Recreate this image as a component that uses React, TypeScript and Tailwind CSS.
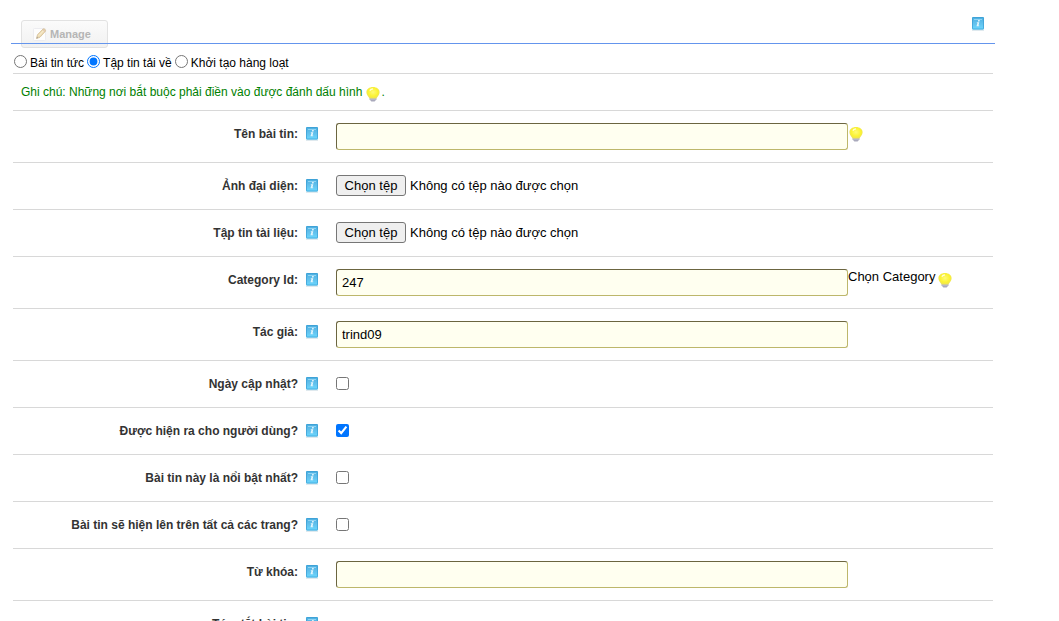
import { useId, useRef, useState } from "react";
import type { ReactNode } from "react";

function InfoIcon() {
  return (
    <svg width="14" height="16" viewBox="0 0 14 16" aria-hidden="true" className="block">
      <defs>
        <linearGradient id="info-blue" x1="0" y1="0" x2="0" y2="1">
          <stop offset="0" stopColor="#4aaee0" />
          <stop offset="0.5" stopColor="#62c0ec" />
          <stop offset="1" stopColor="#6ad8ff" />
        </linearGradient>
      </defs>
      <rect x="1" y="13" width="12" height="2" fill="#dfe9ee" />
      <rect x="1" y="1" width="12" height="12.5" rx="1" fill="url(#info-blue)" />
      <rect x="1.5" y="1.5" width="11" height="11.5" rx="0.8" fill="none" stroke="#3a9dd3" strokeOpacity="0.7" />
      <path d="M3 3h8v1H3z" fill="#8fd3f3" />
      <path d="M7.2 4h1.6l-.3 1.4H6.9zM5.9 6.2h2.4l-.8 3.2h.8l-.2.9H5.5l.9-3.2h-.7z" fill="#e4f6fd" />
    </svg>
  );
}

function BulbIcon() {
  return (
    <svg width="14" height="16" viewBox="0 0 14 16" aria-hidden="true" className="block">
      <defs>
        <radialGradient id="bulb-glow" cx="0.5" cy="0.45" r="0.6">
          <stop offset="0" stopColor="#fffa78" />
          <stop offset="0.6" stopColor="#fbf332" />
          <stop offset="1" stopColor="#e9de60" />
        </radialGradient>
      </defs>
      <path d="M3.6 11.4h6.800v2.100L8.600 15.500H5.400L3.600 13.500z" fill="#a9a9bc" />
      <path d="M3.800 13h6.400" stroke="#cdcddb" strokeWidth="0.8" />
      <path d="M7 1C3.200 1 .4 3.200.4 6.200c0 2.600 1.900 4.200 3.200 6.200h6.800c1.300-2 3.200-3.600 3.200-6.200C13.600 3.200 10.800 1 7 1z" fill="url(#bulb-glow)" />
      <path d="M3.800 4.600c.7-1.100 1.700-1.600 3.200-1.700" stroke="#fffde0" strokeWidth="1.200" fill="none" />
    </svg>
  );
}

function EditIcon() {
  return (
    <svg width="16" height="16" viewBox="0 0 16 16" aria-hidden="true" className="-ml-0.5 mr-0.5">
      <rect x="1.5" y="2.5" width="12" height="12" rx="1" fill="#fdfdfd" stroke="#ececf0" />
      <path d="M4.5 12.500l1-3.800 5.500-5.700c1.200-.9 3.300 1 2.400 2.300l-5.400 5.900z" fill="#eddcb4" stroke="#d3bd94" strokeWidth="0.8" />
      <path d="M6.800 9.700l5-5.200" stroke="#fbf1d6" />
      <path d="M4.500 12.500l.5-1.900 1.300 1.300z" fill="#a9a39a" />
      <path d="M10.800 3.400l2.200 2.100" stroke="#d9b9ae" />
    </svg>
  );
}

function Row({ label, htmlFor, children }: { label: string; htmlFor: string; children: ReactNode }) {
  return (
    <div className="flex items-start border-b border-[#d8d8d8] py-3">
      <div className="flex w-[306px] shrink-0 items-center justify-end gap-[7px] leading-[22px]">
        <label htmlFor={htmlFor} className="font-bold text-[#333]">{label}</label>
        <InfoIcon />
      </div>
      <div className="flex min-h-[22px] flex-1 items-start pl-[17px] text-[13px]">{children}</div>
    </div>
  );
}

const fieldStyle =
  "w-full max-w-[512px] rounded-[3px] border border-[#bdb76b] border-t-[#6b6540] border-l-[#6b6540] bg-[#fffff0] px-[5px] text-black";

function TextRow({ label, value = "", after }: { label: string; value?: string; after?: ReactNode }) {
  const id = useId();
  return (
    <Row label={label} htmlFor={id}>
      <input id={id} type="text" defaultValue={value} className={`h-[27px] ${fieldStyle}`} />
      {after}
    </Row>
  );
}

function SummaryRow({ label }: { label: string }) {
  const id = useId();
  return (
    <Row label={label} htmlFor={id}>
      <textarea id={id} rows={5} className={`mt-3 ${fieldStyle}`} />
    </Row>
  );
}

function FileRow({ label }: { label: string }) {
  const id = useId();
  const picker = useRef<HTMLInputElement>(null);
  const [name, setName] = useState("Không có tệp nào được chọn");
  return (
    <Row label={label} htmlFor={id}>
      <input
        ref={picker}
        id={id}
        type="file"
        className="hidden"
        onChange={(e) => setName(e.target.files?.[0]?.name ?? "Không có tệp nào được chọn")}
      />
      <button
        type="button"
        onClick={() => picker.current?.click()}
        className="h-[21px] w-[70px] rounded-[3px] border border-[#767676] bg-[#efefef] leading-[19px] text-black"
      >
        Chọn tệp
      </button>
      <span className="ml-1 leading-[21px]">{name}</span>
    </Row>
  );
}

function CheckRow({ label, checked = false }: { label: string; checked?: boolean }) {
  const id = useId();
  return (
    <Row label={label} htmlFor={id}>
      <input id={id} type="checkbox" defaultChecked={checked} className="mt-1 size-[13px]" />
    </Row>
  );
}

const kinds = ["Bài tin tức", "Tập tin tải về", "Khởi tạo hàng loạt"];

export default function App() {
  return (
    <main className="isolate mr-16 ml-[11px] bg-white pt-4 font-['Liberation_Sans',Arial,sans-serif] text-xs text-black">
      <header className="flex h-7 items-start justify-between border-b border-[#6495ed] px-2.5">
        <button
          type="button"
          disabled
          className="relative -z-10 mt-1 flex h-7 w-[87px] shrink-0 items-center rounded-[3px] border border-[#e2e2e2] bg-linear-to-b from-[#fbfbfb] to-[#f1f1f1] pl-3 text-[11px] font-bold text-[#b5b5b5]"
        >
          <EditIcon />
          Manage
        </button>
        <InfoIcon />
      </header>
      <form className="px-0.5">
        <div className="flex h-[30px] items-center gap-[3px] border-b border-[#d8d8d8] pt-2 pl-px">
          {kinds.map((kind, i) => (
            <label key={kind} className="flex items-center gap-[3px] whitespace-nowrap">
              <input type="radio" name="kind" defaultChecked={i === 1} className="mb-0.5 size-[13px]" />
              {kind}
            </label>
          ))}
        </div>
        <p className="flex h-[37px] items-center border-b border-[#d8d8d8] pl-2 text-[#008000]">
          Ghi chú: Những nơi bắt buộc phải điền vào được đánh dấu hình
          <span className="mr-px ml-1 pt-[3px]"><BulbIcon /></span>.
        </p>
        <TextRow label="Tên bài tin:" after={<span className="ml-px pt-[3px]"><BulbIcon /></span>} />
        <FileRow label="Ảnh đại diện:" />
        <FileRow label="Tập tin tài liệu:" />
        <TextRow
          label="Category Id:"
          value="247"
          after={
            <span className="flex shrink-0 leading-4 whitespace-nowrap">
              Chọn Category
              <span className="ml-[3px] pt-[3px]"><BulbIcon /></span>
            </span>
          }
        />
        <TextRow label="Tác giả:" value="trind09" />
        <CheckRow label="Ngày cập nhật?" />
        <CheckRow label="Được hiện ra cho người dùng?" checked />
        <CheckRow label="Bài tin này là nổi bật nhất?" />
        <CheckRow label="Bài tin sẽ hiện lên trên tất cả các trang?" />
        <TextRow label="Từ khóa:" />
        <SummaryRow label="Tóm tắt bài tin:" />
      </form>
    </main>
  );
}
